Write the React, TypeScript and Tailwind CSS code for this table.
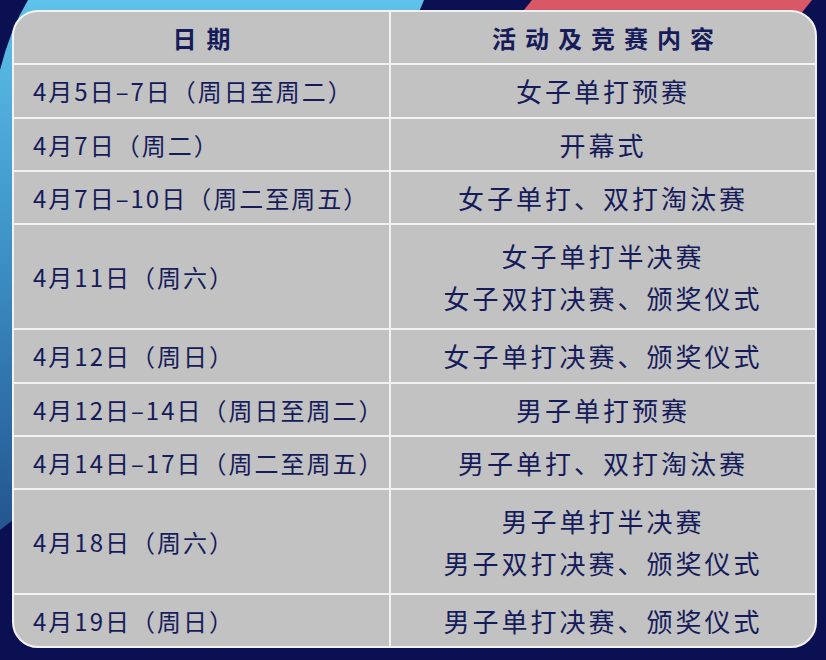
import React from "react";

type Row = { date: string; events: string[]; h: string };

const rows: Row[] = [
  { date: "4月5日–7日（周日至周二）", events: ["女子单打预赛"], h: "h-[54px]" },
  { date: "4月7日（周二）", events: ["开幕式"], h: "h-[53px]" },
  { date: "4月7日–10日（周二至周五）", events: ["女子单打、双打淘汰赛"], h: "h-[53px]" },
  { date: "4月11日（周六）", events: ["女子单打半决赛", "女子双打决赛、颁奖仪式"], h: "h-[105px]" },
  { date: "4月12日（周日）", events: ["女子单打决赛、颁奖仪式"], h: "h-[54px]" },
  { date: "4月12日–14日（周日至周二）", events: ["男子单打预赛"], h: "h-[53px]" },
  { date: "4月14日–17日（周二至周五）", events: ["男子单打、双打淘汰赛"], h: "h-[53px]" },
  { date: "4月18日（周六）", events: ["男子单打半决赛", "男子双打决赛、颁奖仪式"], h: "h-[105px]" },
  { date: "4月19日（周日）", events: ["男子单打决赛、颁奖仪式"], h: "h-[53px]" },
];

function Backdrop() {
  return (
    <svg className="absolute inset-0 w-full h-full" viewBox="0 0 826 660" preserveAspectRatio="none">
      <defs>
        <linearGradient id="blue" x1="0" y1="0" x2="0" y2="1">
          <stop offset="0" stopColor="#5ec2ea" />
          <stop offset="0.5" stopColor="#3b8ec4" />
          <stop offset="1" stopColor="#24558f" />
        </linearGradient>
      </defs>
      <rect width="826" height="660" fill="#0a1052" />
      <path d="M28 0 L424 0 L300 300 L0 530 L0 70 Q10 30 28 0 Z" fill="url(#blue)" />
      <path d="M532 0 L812 0 L780 40 L500 40 Z" fill="#d95868" />
    </svg>
  );
}

export default function App() {
  return (
    <div
      className="relative w-[826px] h-[660px] overflow-hidden"
      style={{ fontFamily: '"Noto Sans CJK SC", "Noto Sans", sans-serif' }}
    >
      <Backdrop />
      <div className="relative pt-[10px] pl-[12px]">
        <div className="w-[805px] rounded-[26px] border-2 border-[#f2f2f2] bg-[#c2c2c2] overflow-hidden text-[#161b5a]">
          <div className="grid grid-cols-[375px_1fr] h-[51px]">
            <div className="flex items-center justify-center text-[24px] font-bold tracking-[10px] pl-[10px]">
              日期
            </div>
            <div className="flex items-center justify-center border-l-2 border-[#f2f2f2] text-[24px] font-bold tracking-[9px] pl-[9px]">
              活动及竞赛内容
            </div>
          </div>
          {rows.map((r) => (
            <div key={r.date} className={`grid grid-cols-[375px_1fr] border-t-2 border-[#f2f2f2] ${r.h}`}>
              <div className="flex items-center pl-[19px] text-[24px] tracking-[2px]">{r.date}</div>
              <div className="flex flex-col items-center justify-center border-l-2 border-[#f2f2f2] text-[26px] tracking-[3px] leading-[42px]">
                {r.events.map((e) => (
                  <span key={e}>{e}</span>
                ))}
              </div>
            </div>
          ))}
        </div>
      </div>
    </div>
  );
}
